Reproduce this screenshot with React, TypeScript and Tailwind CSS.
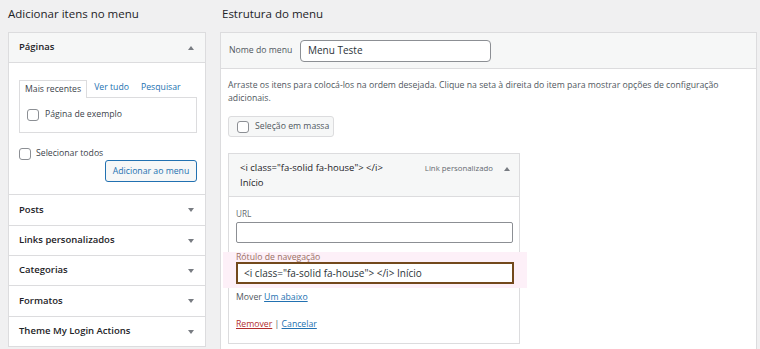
import React from 'react';

const font = { fontFamily: '"Open Sans", "Noto Sans", sans-serif' };

const Check: React.FC = () => (
  <span className="inline-block w-[12px] h-[12px] rounded-[3px] border border-[#8c8f94] bg-white shrink-0" />
);

const Arrow: React.FC<{ up?: boolean }> = ({ up }) => (
  <svg width="6" height="4" viewBox="0 0 6 4" className="shrink-0">
    {up ? <path d="M0 4 L3 0 L6 4 Z" fill="#787c82" /> : <path d="M0 0 L3 4 L6 0 Z" fill="#787c82" />}
  </svg>
);

// section rows below "Páginas", heights measured from the screenshot
const sections = [
  { name: 'Posts', h: 'h-[31px]' },
  { name: 'Links personalizados', h: 'h-[30px]' },
  { name: 'Categorias', h: 'h-[30px]' },
  { name: 'Formatos', h: 'h-[31px]' },
  { name: 'Theme My Login Actions', h: 'h-[30px]' },
];

export default function App() {
  return (
    <div style={font} className="w-[760px] h-[349px] bg-[#f0f0f1] overflow-hidden flex text-[#3c434a]">
      {/* Left column */}
      <div className="w-[198px] ml-[8px] shrink-0">
        <h2 className="h-[32px] pt-[5px] text-[11.5px] leading-[18px] text-[#1d2327]">Adicionar itens no menu</h2>
        <div className="bg-white border border-[#dcdcde]">
          <div className="h-[30px] bg-[#f6f7f7] border-b border-[#dcdcde] flex items-center justify-between pl-[10px] pr-[11px]">
            <span className="text-[9.5px] font-semibold text-[#1d2327]">Páginas</span>
            <Arrow up />
          </div>
          <div className="pl-[10px] pr-[8px] pt-[16px] pb-[12px]">
            <div className="flex items-end text-[8.7px] h-[18px]">
              <div className="h-[18px] px-[5px] border border-b-0 border-[#dcdcde] bg-white flex items-center relative top-[1px]">Mais recentes</div>
              <span className="ml-[7px] mb-[3px] text-[#2271b1]">Ver tudo</span>
              <span className="ml-[12px] mb-[3px] text-[#2271b1]">Pesquisar</span>
            </div>
            <div className="h-[36px] border border-[#dcdcde] flex items-center pl-[7px] gap-[6px] text-[8.7px]">
              <Check />
              <span>Página de exemplo</span>
            </div>
            <div className="mt-[14px] flex items-center gap-[5px] text-[8.7px]">
              <Check />
              <span>Selecionar todos</span>
            </div>
            <div className="flex justify-end">
              <button className="h-[22px] w-[92px] rounded-[3px] border border-[#2271b1] bg-[#f6f7f7] text-[#2271b1] text-[8.7px]">
                Adicionar ao menu
              </button>
            </div>
          </div>
          {sections.map((s) => (
            <div key={s.name} className={`${s.h} border-t border-[#dcdcde] flex items-center justify-between pl-[10px] pr-[11px]`}>
              <span className="text-[9.5px] font-semibold text-[#1d2327]">{s.name}</span>
              <Arrow />
            </div>
          ))}
        </div>
      </div>

      {/* Right column */}
      <div className="w-[537px] ml-[14px] shrink-0">
        <h2 className="h-[32px] pt-[5px] pl-[2px] text-[11.5px] leading-[18px] text-[#1d2327]">Estrutura do menu</h2>
        <div className="bg-white border border-[#dcdcde] h-[330px]">
          <div className="h-[36px] bg-[#f6f7f7] border-b border-[#dcdcde] flex items-center pl-[8px]">
            <span className="w-[71px] text-[8.7px] text-[#50575e]">Nome do menu</span>
            <div className="w-[191px] h-[22px] rounded-[4px] border border-[#8c8f94] bg-white flex items-center pl-[7px] text-[10px] text-[#2c3338]">
              Menu Teste
            </div>
          </div>
          <div className="px-[7px] pt-[10px]">
            <p className="text-[8.7px] leading-[13px] text-[#50575e] w-[500px]">
              Arraste os itens para colocá-los na ordem desejada. Clique na seta à direita do item para mostrar opções de configuração adicionais.
            </p>
            <div className="mt-[11px] h-[21px] w-[106px] rounded-[3px] border border-[#dcdcde] bg-[#f6f7f7] flex items-center pl-[8px] gap-[6px] text-[8.7px] text-[#50575e] whitespace-nowrap">
              <Check />
              <span>Seleção em massa</span>
            </div>
            <div className="mt-[16px] w-[292px] border border-[#dcdcde]">
              <div className="h-[43px] bg-[#f6f7f7] border-b border-[#dcdcde] flex items-start justify-between pl-[11px] pr-[9px] pt-[6px]">
                <div className="text-[9.5px] leading-[15px] text-[#1d2327]">
                  <div>&lt;i class="fa-solid fa-house"&gt; &lt;/i&gt;</div>
                  <div>Início</div>
                </div>
                <div className="flex items-center gap-[11px] pt-[1px] text-[7.8px] leading-[15px] text-[#646970]">
                  <span>Link personalizado</span>
                  <Arrow up />
                </div>
              </div>
              <div className="px-[7px] pt-[11px] pb-[12px] bg-white">
                <div className="text-[8.2px] leading-[12px] text-[#646970]">URL</div>
                <div className="mt-[2px] h-[21px] w-[277px] rounded-[2px] border border-[#8c8f94] bg-white" />
                <div className="-ml-[13px] -mr-[15px] pl-[13px] pr-[15px] mt-[9px] pt-[1px] pb-[4px] bg-[#fdf0f8]">
                  <div className="text-[8.7px] leading-[8px] text-[#9a6f63]">Rótulo de navegação</div>
                  <div className="mt-[1px] h-[22px] w-[278px] border-2 border-[#73491c] bg-white flex items-center pl-[6px] text-[10px] text-[#2c3338]">
                    &lt;i class="fa-solid fa-house"&gt; &lt;/i&gt; Início
                  </div>
                </div>
                <div className="mt-[2px] text-[8.7px] leading-[14px] text-[#50575e]">
                  Mover <span className="text-[#2271b1] underline">Um abaixo</span>
                </div>
                <div className="mt-[13px] text-[8.7px] leading-[14px] text-[#50575e]">
                  <span className="text-[#b32d2e] underline">Remover</span> | <span className="text-[#2271b1] underline">Cancelar</span>
                </div>
              </div>
            </div>
          </div>
        </div>
      </div>
    </div>
  );
}
